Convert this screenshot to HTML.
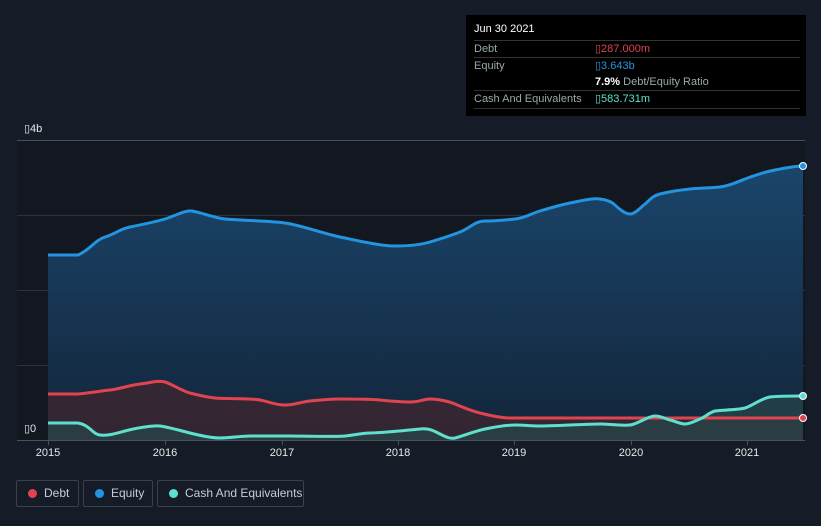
<!DOCTYPE html>
<html><head><meta charset="utf-8"><style>
*{margin:0;padding:0;box-sizing:border-box}
body{width:821px;height:526px;background:#161c27;font-family:"Liberation Sans",sans-serif;position:relative;overflow:hidden}
.tip{position:absolute;left:466px;top:15px;width:340px;height:101px;background:#000;color:#fff;font-size:11px}
.tip .row{position:absolute;left:8px;right:6px;height:17px;line-height:17px;border-top:1px solid #333;color:#9aa}
.tip span.v{position:absolute;left:121px}
.leg{position:absolute;top:480px;height:27px;border:1px solid #3a404c;border-radius:2px;color:#c8ccd2;font-size:12px;line-height:25px;padding-left:27px}
.leg i{position:absolute;left:11px;top:8px;width:9px;height:9px;border-radius:50%}
.xl{position:absolute;top:447px;color:#e6e8ea;font-size:11px;transform:translateX(-50%)}
</style></head><body>
<svg width="821" height="526" style="position:absolute;left:0;top:0">
<defs>
<linearGradient id="eg" x1="0" y1="0" x2="0" y2="1"><stop offset="0" stop-color="#1b4a73" stop-opacity=".9"/><stop offset="1" stop-color="#13273d" stop-opacity=".9"/></linearGradient>
</defs>
<rect x="17" y="140" width="788" height="300" fill="#121720"/>
<g stroke="#2c323d" stroke-width="1">
<line x1="17" y1="215.5" x2="805" y2="215.5"/><line x1="17" y1="290.5" x2="805" y2="290.5"/><line x1="17" y1="365.5" x2="805" y2="365.5"/>
</g>
<line x1="17" y1="140.5" x2="805" y2="140.5" stroke="#4a505a"/>
<path d="M48,255 L78,255 C90,250 95,240 105,237 S120,229 130,227 S155,222 165,219 S185,210 192,211 S215,218 225,219 S270,221 285,223 S325,234 340,237 S380,246 395,246 S420,245 430,242 S450,236 460,232 S475,221 485,221 S505,220 515,219 S530,214 540,211 S560,205 570,203 S592,198 600,199 S612,202 615,205 S625,214 630,214 S640,208 645,204 S652,196 660,194 S680,190 690,189 S712,188 720,187 S735,183 745,179 S765,172 775,170 S795,166 803,166 L803,440 L48,440Z" fill="url(#eg)"/>
<path d="M48,394 L78,394 C90,393 100,391 110,390 S130,385 140,384 S158,380 165,382 S182,391 190,393 S205,397 215,398 S250,398 260,400 S275,405 285,405 S300,402 310,401 S330,399 340,399 S370,399 380,400 S400,402 410,402 S423,399 430,399 S448,401 455,404 S472,411 480,413 S500,418 510,418 L803,418 L803,440 L48,440Z" fill="#3a2630" opacity=".85"/>
<path d="M48,423 L78,423 C90,425 92,434 100,435 S118,433 125,431 S152,425 160,426 S182,431 190,433 S212,438 220,438 S242,436 250,436 S280,436 290,436 S335,437 345,436 S362,433 370,433 S410,430 420,429 S434,431 440,434 S450,439 455,438 S475,431 485,429 S505,425 515,425 S530,426 540,426 S590,424 600,424 S622,426 630,425 S648,416 655,416 S665,419 670,420 S680,424 685,424 S695,421 700,419 S710,412 715,411 S738,410 745,408 S762,398 770,397 S795,396 803,396 L803,440 L48,440Z" fill="#27474a" opacity=".7"/>
<path d="M48,255 L78,255 C90,250 95,240 105,237 S120,229 130,227 S155,222 165,219 S185,210 192,211 S215,218 225,219 S270,221 285,223 S325,234 340,237 S380,246 395,246 S420,245 430,242 S450,236 460,232 S475,221 485,221 S505,220 515,219 S530,214 540,211 S560,205 570,203 S592,198 600,199 S612,202 615,205 S625,214 630,214 S640,208 645,204 S652,196 660,194 S680,190 690,189 S712,188 720,187 S735,183 745,179 S765,172 775,170 S795,166 803,166" fill="none" stroke="#2394df" stroke-width="3"/>
<path d="M48,394 L78,394 C90,393 100,391 110,390 S130,385 140,384 S158,380 165,382 S182,391 190,393 S205,397 215,398 S250,398 260,400 S275,405 285,405 S300,402 310,401 S330,399 340,399 S370,399 380,400 S400,402 410,402 S423,399 430,399 S448,401 455,404 S472,411 480,413 S500,418 510,418 L803,418" fill="none" stroke="#e0444f" stroke-width="3"/>
<path d="M48,423 L78,423 C90,425 92,434 100,435 S118,433 125,431 S152,425 160,426 S182,431 190,433 S212,438 220,438 S242,436 250,436 S280,436 290,436 S335,437 345,436 S362,433 370,433 S410,430 420,429 S434,431 440,434 S450,439 455,438 S475,431 485,429 S505,425 515,425 S530,426 540,426 S590,424 600,424 S622,426 630,425 S648,416 655,416 S665,419 670,420 S680,424 685,424 S695,421 700,419 S710,412 715,411 S738,410 745,408 S762,398 770,397 S795,396 803,396" fill="none" stroke="#5fe0cf" stroke-width="3"/>
<line x1="17" y1="440.5" x2="805" y2="440.5" stroke="#4a505a"/>
<g stroke="#4a505a"><line x1="48.5" y1="440" x2="48.5" y2="445"/><line x1="165.5" y1="440" x2="165.5" y2="445"/><line x1="282.5" y1="440" x2="282.5" y2="445"/><line x1="398.5" y1="440" x2="398.5" y2="445"/><line x1="514.5" y1="440" x2="514.5" y2="445"/><line x1="631.5" y1="440" x2="631.5" y2="445"/><line x1="747.5" y1="440" x2="747.5" y2="445"/></g>
<circle cx="803" cy="166" r="3.5" fill="#2394df" stroke="#fff" stroke-width="1"/>
<circle cx="803" cy="418" r="3.5" fill="#e0444f" stroke="#fff" stroke-width="1"/>
<circle cx="803" cy="396" r="3.5" fill="#5fe0cf" stroke="#fff" stroke-width="1"/>
<text x="24" y="132" fill="#e6e8ea" font-size="11" font-family="Liberation Sans">▯4b</text>
<text x="24" y="432" fill="#e6e8ea" font-size="11" font-family="Liberation Sans">▯0</text>
</svg>
<div class="xl" style="left:48px">2015</div><div class="xl" style="left:165px">2016</div><div class="xl" style="left:282px">2017</div><div class="xl" style="left:398px">2018</div><div class="xl" style="left:514px">2019</div><div class="xl" style="left:631px">2020</div><div class="xl" style="left:747px">2021</div>
<div class="tip">
<div style="position:absolute;left:8px;top:8px;font-size:11px;color:#fff">Jun 30 2021</div>
<div class="row" style="top:25px">Debt<span class="v" style="color:#e0444f">▯287.000m</span></div>
<div class="row" style="top:42px">Equity<span class="v" style="color:#2394df">▯3.643b</span></div>
<div class="row" style="top:59px;border-top:none"><span class="v" style="color:#9aa"><b style="color:#fff">7.9%</b> Debt/Equity Ratio</span></div>
<div class="row" style="top:75px">Cash And Equivalents<span class="v" style="color:#5fe0cf">▯583.731m</span></div>
<div style="position:absolute;left:8px;right:6px;top:93px;border-top:1px solid #333"></div>
</div>
<div class="leg" style="left:16px;width:63px"><i style="background:#e0444f"></i>Debt</div>
<div class="leg" style="left:83px;width:70px"><i style="background:#2394df"></i>Equity</div>
<div class="leg" style="left:157px;width:147px"><i style="background:#5fe0cf"></i>Cash And Equivalents</div>
</body></html>
